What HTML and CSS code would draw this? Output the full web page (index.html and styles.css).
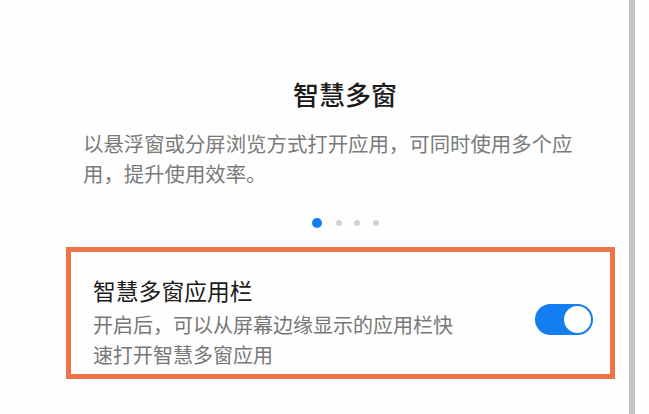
FILE: index.html
```html
<!DOCTYPE html>
<html lang="zh-CN">
<head>
<meta charset="utf-8">
<link rel="stylesheet" href="styles.css">
</head>
<body>
<div class="screen">
  <main class="content">
    <section class="intro">
      <h1 class="intro-title">智慧多窗</h1>
      <p class="intro-desc">以悬浮窗或分屏浏览方式打开应用，可同时使用多个应用，提升使用效率。</p>
    </section>
    <div class="pager">
      <span class="dot dot-active"></span>
      <span class="dot"></span>
      <span class="dot"></span>
      <span class="dot"></span>
    </div>
    <div class="setting">
      <div class="setting-text">
        <div class="setting-title">智慧多窗应用栏</div>
        <div class="setting-desc">开启后，可以从屏幕边缘显示的应用栏快速打开智慧多窗应用</div>
      </div>
      <div class="switch"><span class="knob"></span></div>
    </div>
  </main>
  <div class="scrollbar"></div>
</div>
</body>
</html>
```
FILE: styles.css
```css
* { box-sizing: border-box; }
html, body {
  margin: 0;
  padding: 0;
  background: #fefefe;
  width: 649px;
  height: 414px;
  overflow: hidden;
  font-family: "Noto Sans CJK SC", "Noto Sans", sans-serif;
}
.screen {
  display: flex;
  height: 414px;
}
.content {
  width: 629px;
  padding-top: 81px;
}
.intro {
  margin-left: 83px;
  width: 524px;
}
.intro-title {
  margin: 0;
  font-size: 26px;
  line-height: 26px;
  font-weight: 500;
  color: #1b1b1b;
  text-align: center;
}
.intro-desc {
  margin: 21px 0 0;
  width: 505px;
  font-size: 20.4px;
  line-height: 30px;
  color: #7a7a7a;
}
.pager {
  display: flex;
  align-items: center;
  gap: 12.5px;
  height: 10px;
  margin: 30px 0 0 312px;
}
.dot {
  width: 6px;
  height: 6px;
  border-radius: 50%;
  background: #d3d3d3;
}
.dot-active {
  width: 10px;
  height: 10px;
  background: #137ef0;
  margin-right: 1px;
}
.setting {
  margin: 19px 0 0 66px;
  width: 549px;
  height: 132px;
  border: 5px solid #ee7447;
  display: flex;
  align-items: flex-start;
  padding: 24px 17px 3px 22px;
}
.setting-text {
  width: 375px;
}
.setting-title {
  font-size: 22.8px;
  line-height: 30px;
  color: #1b1b1b;
  margin-bottom: 4px;
}
.setting-desc {
  font-size: 20px;
  line-height: 30px;
  color: #777777;
}
.switch {
  margin-left: auto;
  margin-top: 28px;
  width: 58px;
  height: 31px;
  border-radius: 16px;
  background: #137ef0;
  display: flex;
  align-items: center;
  justify-content: flex-end;
  padding-right: 2px;
}
.knob {
  width: 27px;
  height: 27px;
  border-radius: 50%;
  background: #ffffff;
}
.scrollbar {
  width: 6px;
  height: 414px;
  background: #c3c3c3;
}
```
